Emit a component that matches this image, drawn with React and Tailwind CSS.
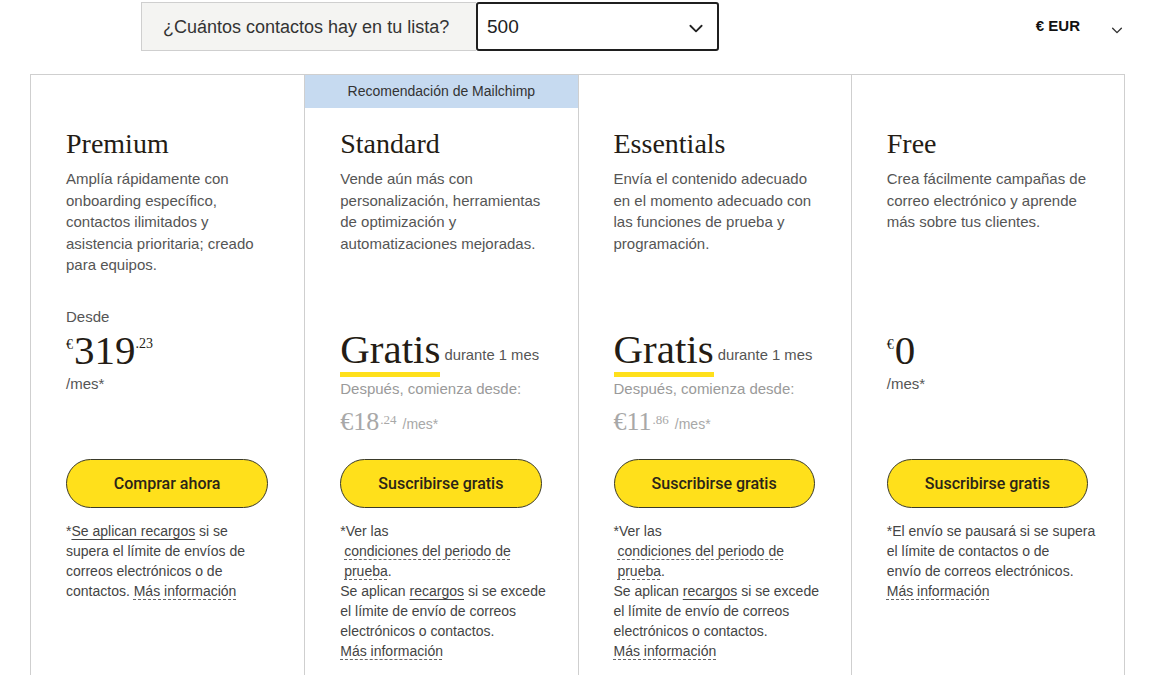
import React from "react";

const sans = { fontFamily: '"Liberation Sans", Arial, sans-serif' };
const serif = { fontFamily: '"Liberation Serif", "Times New Roman", serif' };
const roboto = { fontFamily: 'Roboto, "Liberation Sans", Arial, sans-serif' };

function Chevron({ className }) {
  return (
    <svg viewBox="0 0 16 16" className={className} fill="none" stroke="currentColor" strokeWidth="1.6" strokeLinecap="round" strokeLinejoin="round">
      <path d="M3 6l5 5 5-5" />
    </svg>
  );
}

function Lines({ lines, className }) {
  return (
    <div className={className}>
      {lines.map((l, i) => (
        <div key={i} className="whitespace-nowrap">{l}</div>
      ))}
    </div>
  );
}

const dotted = "underline decoration-dashed decoration-1 underline-offset-[3px] decoration-[#666]";
const solid = "underline decoration-1 underline-offset-[3px]";

function Button({ children }) {
  return (
    <div className="h-[49px] w-full rounded-full bg-[#ffe01b] border border-[#3a3a2a] flex items-center justify-center text-[16px] text-[#2a2418] font-medium" style={roboto}>
      {children}
    </div>
  );
}

function Gratis({ price, cents }) {
  return (
    <div>
      <div className="h-[46px] flex items-end">
        <div className="flex flex-col">
          <span className="text-[41px] leading-[36px] text-[#241c15]" style={serif}>Gratis</span>
          <span className="h-[5px] mt-[5px] bg-[#ffe01b] w-full" />
        </div>
        <span className="text-[14.8px] text-[#555] ml-[4px] mb-[14px] leading-none">durante 1 mes</span>
      </div>
      <div className="text-[15px] text-[#9a9a9a] leading-[20px] mt-[2px]">Después, comienza desde:</div>
      <div className="flex items-start mt-[10px] text-[#a8a8a8] h-[26px]">
        <span className="text-[26px] leading-[26px]" style={serif}>€{price}</span>
        <span className="text-[13px] leading-none mt-[4px] ml-[1px]" style={serif}>.{cents}</span>
        <span className="text-[14px] ml-[6px] mt-[8px] leading-none">/mes*</span>
      </div>
    </div>
  );
}

function Column({ banner, title, desc, price, note, button }) {
  return (
    <div className="flex flex-col border-l border-[#cfcfcf] first:border-l-0">
      <div className={"h-[33px] flex items-center justify-center text-[14px] text-[#333] " + (banner ? "bg-[#c6daf0]" : "")}>
        {banner}
      </div>
      <div className="pl-[35px] pr-[36px] pt-[20px]">
        <div className="text-[28px] leading-[32px] text-[#241c15]" style={serif}>{title}</div>
        <Lines lines={desc} className="mt-[8px] h-[138px] text-[15px] leading-[21.5px] text-[#555]" />
        <div className="h-[153px]">{price}</div>
        <Button>{button}</Button>
        <div className="mt-[13px] text-[14px] leading-[20px] text-[#444]">{note}</div>
      </div>
    </div>
  );
}

function FixedPrice({ desde, amount, cents }) {
  return (
    <div>
      <div className="h-[21px] text-[15px] leading-[21px] text-[#555]">{desde}</div>
      <div className="h-[46px] flex items-start text-[#241c15]">
        <span className="text-[14px] mt-[7px]" style={serif}>€</span>
        <span className="text-[41px] leading-[46px] ml-[1px]" style={serif}>{amount}</span>
        {cents && <span className="text-[14px] mt-[6px]" style={serif}>.{cents}</span>}
      </div>
      <div className="text-[15px] leading-[21px] text-[#555]">/mes*</div>
    </div>
  );
}

const trialNote = (
  <Lines lines={[
    "*Ver las",
    <>&nbsp;<span className={dotted}>condiciones del periodo de</span></>,
    <>&nbsp;<span className={dotted}>prueba</span>.</>,
    <>Se aplican <span className={solid}>recargos</span> si se excede</>,
    "el límite de envío de correos",
    "electrónicos o contactos.",
    <span className={dotted}>Más información</span>,
  ]} />
);

export default function App() {
  return (
    <div className="w-[1151px] h-[675px] overflow-hidden bg-white" style={sans}>
      <div className="ml-[30px] w-[1094px] pt-[2px] flex items-center">
        <div className="ml-[111px] h-[49px] w-[335px] bg-[#f4f4f2] border border-[#cfcfcf] border-r-0 flex items-center pl-[21px] pt-[2px] text-[18px] text-[#333]">
          ¿Cuántos contactos hay en tu lista?
        </div>
        <div className="h-[49px] w-[243px] border-2 border-[#1f1f1f] rounded-[3px] flex items-center justify-between pl-[9px] pr-[12px] pt-[2px] text-[19px] text-[#222]">
          <span>500</span>
          <Chevron className="w-[18px] h-[18px] text-[#222]" />
        </div>
        <div className="ml-auto flex items-center">
          <span className="text-[15px] font-bold text-[#111]">€ EUR</span>
          <Chevron className="ml-[30px] mt-[6px] w-[14px] h-[14px] text-[#333]" />
        </div>
      </div>

      <div className="ml-[30px] mt-[23px] w-[1095px] grid grid-cols-4 border border-[#cfcfcf] border-b-0 h-[620px]">
        <Column
          title="Premium"
          desc={["Amplía rápidamente con", "onboarding específico,", "contactos ilimitados y", "asistencia prioritaria; creado", "para equipos."]}
          price={<FixedPrice desde="Desde" amount="319" cents="23" />}
          button="Comprar ahora"
          note={
            <Lines lines={[
              <>*<span className={solid}>Se aplican recargos</span> si se</>,
              "supera el límite de envíos de",
              "correos electrónicos o de",
              <>contactos. <span className={dotted}>Más información</span></>,
            ]} />
          }
        />
        <Column
          banner="Recomendación de Mailchimp"
          title="Standard"
          desc={["Vende aún más con", "personalización, herramientas", "de optimización y", "automatizaciones mejoradas."]}
          price={<div className="pt-[25px]"><Gratis price="18" cents="24" /></div>}
          button="Suscribirse gratis"
          note={trialNote}
        />
        <Column
          title="Essentials"
          desc={["Envía el contenido adecuado", "en el momento adecuado con", "las funciones de prueba y", "programación."]}
          price={<div className="pt-[25px]"><Gratis price="11" cents="86" /></div>}
          button="Suscribirse gratis"
          note={trialNote}
        />
        <Column
          title="Free"
          desc={["Crea fácilmente campañas de", "correo electrónico y aprende", "más sobre tus clientes."]}
          price={<FixedPrice desde="" amount="0" />}
          button="Suscribirse gratis"
          note={
            <Lines lines={[
              "*El envío se pausará si se supera",
              "el límite de contactos o de",
              "envío de correos electrónicos.",
              <span className={dotted}>Más información</span>,
            ]} />
          }
        />
      </div>
    </div>
  );
}
